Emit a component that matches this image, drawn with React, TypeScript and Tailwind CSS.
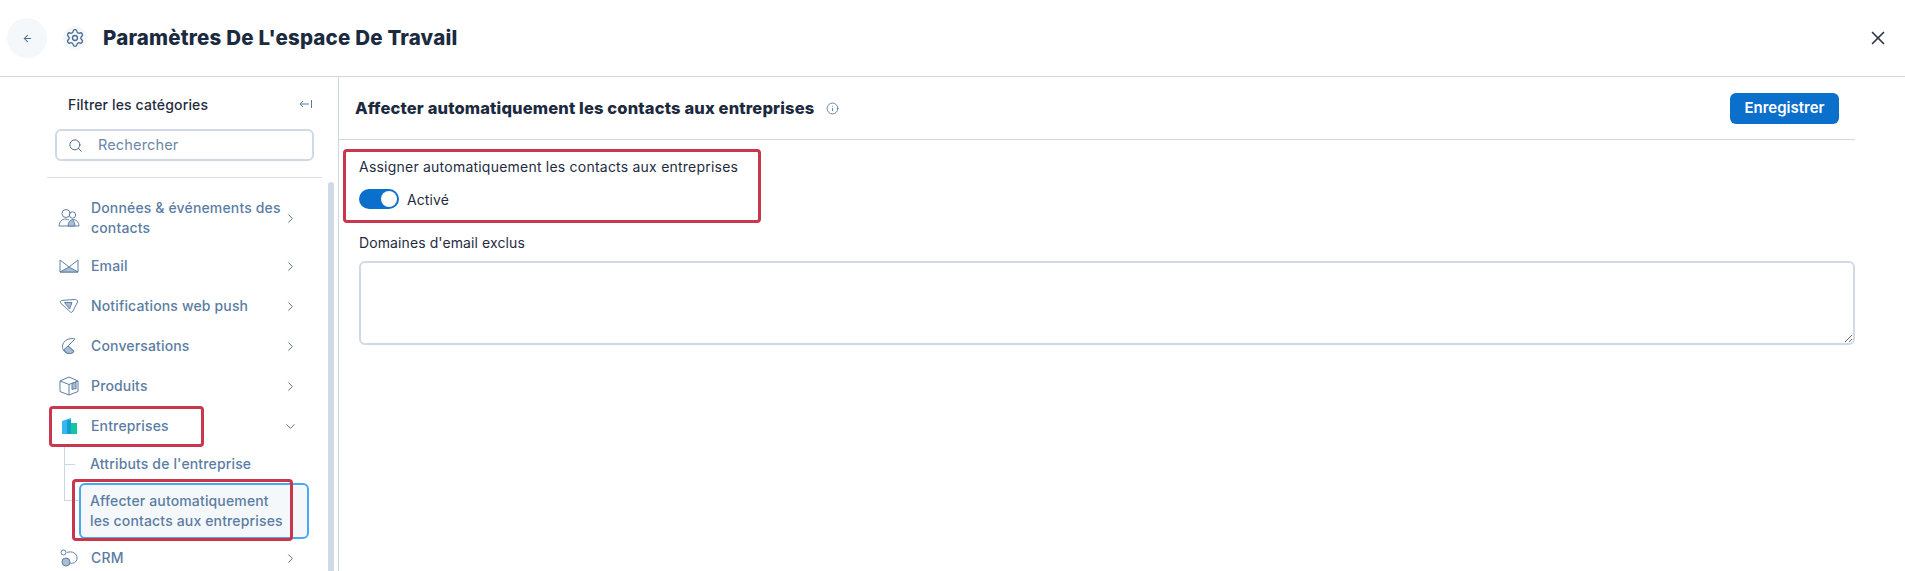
import React from "react";
import { ArrowLeft, ChevronDown, ChevronRight, Info, Search, Settings, X } from "lucide-react";

const body = { fontFamily: "Inter, 'Noto Sans', sans-serif" };

function Users() {
  return (
    <svg width="22" height="20" viewBox="0 0 22 20" fill="none" stroke="#5f80a6" strokeWidth="1">
      <circle cx="8" cy="5.5" r="4" />
      <circle cx="14.5" cy="7" r="3.2" />
      <path d="M1 18c.5-4.5 3-7 6.5-7 1.5 0 2.5.5 3.5 1" />
      <path d="M1 18h20c-.3-4-2.500-6.500-6.500-6.500" />
      <path d="M10 18c0-3.500 2-6 4.500-6.500 1.500 2 2.500 4 2.500 6.500z" fill="#a9bdd3" />
    </svg>
  );
}
function Mail() {
  return (
    <svg width="20" height="14" viewBox="0 0 20 14" fill="none" stroke="#5f80a6" strokeWidth="1">
      <path d="M1 1v12h18V1L10 8z" />
      <path d="M1 13l9-5 9 5z" fill="#a9bdd3" />
    </svg>
  );
}
function Push() {
  return (
    <svg width="20" height="16" viewBox="0 0 20 16" fill="none" stroke="#5f80a6" strokeWidth="1">
      <path d="M2.500 2.500L15 1.500c2.500-.2 4 1 3.500 2.500L14 13c-1 1.800-2.500 1.800-3.500.2L1.500 5c-.5-1.200 0-2.300 1-2.500z" />
      <path d="M5.500 4.500h7.500L10.500 11z" fill="#a9bdd3" />
    </svg>
  );
}
function Chat() {
  return (
    <svg width="16" height="18" viewBox="0 0 16 18" fill="none" stroke="#5f80a6" strokeWidth="1">
      <path d="M14 2C9 .5 2 3 1.500 9c-.3 4 2.500 7.500 6.500 7.500 2 0 4-.7 5-2" />
      <path d="M14 2L7 9l6 5" />
      <path d="M3 12.500L7 9l6 5.500c-1 1.500-3 2-5 2-2.500 0-4-1.500-5-4z" fill="#a9bdd3" />
    </svg>
  );
}
function Box() {
  return (
    <svg width="20" height="20" viewBox="0 0 20 20" fill="none" stroke="#5f80a6" strokeWidth="1">
      <path d="M1 5l9-4 9 4v10.500L10 19l-9-3.500z" />
      <path d="M1 5l9 3.500L19 5M10 8.500V19" />
      <path d="M13 7.500v6l2-.8 2 .2V6z" fill="#a9bdd3" />
    </svg>
  );
}
function Building() {
  return (
    <svg width="15" height="16" viewBox="0 0 15 16">
      <path d="M0 3l9-3v16H0z" fill="#38b6f2" />
      <path d="M9 5h6v11H9z" fill="#12c7a0" />
      <path d="M5 2h4v14H5z" fill="#0f9fd0" />
    </svg>
  );
}
function Crm() {
  return (
    <svg width="18" height="18" viewBox="0 0 18 18" fill="none" stroke="#5f80a6" strokeWidth="1">
      <circle cx="3.500" cy="3.500" r="2.500" />
      <path d="M7 3.500c5-2 10 1 10 5.500s-4 6-7 5" />
      <circle cx="6" cy="13" r="4" fill="#a9bdd3" />
    </svg>
  );
}

function Row({ icon, label, open }: { icon: React.ReactNode; label: string; open?: boolean }) {
  return (
    <div className="relative flex h-10 items-center">
      <span className="flex w-[43px] shrink-0 items-center justify-center pl-[5px] pr-[6px]">{icon}</span>
      <span className="w-[191px] text-[14px] leading-5 font-medium tracking-[0.15px] text-[#5b7da3]">{label}</span>
      <span className="flex w-4 justify-center text-[#4c6c92]">
        {open ? <ChevronDown size={15} strokeWidth={1.5} /> : <ChevronRight size={15} strokeWidth={1.5} />}
      </span>
    </div>
  );
}

export default function App() {
  return (
    <div className="relative h-[571px] overflow-hidden bg-white text-[#1f2c40]" style={body}>
      <header className="flex h-[77px] items-center border-b border-[#cbd7e6] pl-[7px] pr-[16px]">
        <span className="flex h-10 w-10 items-center justify-center rounded-full bg-[#f5f8fb] text-[#4c6c92]">
          <ArrowLeft size={11} strokeWidth={2.2} />
        </span>
        <span className="ml-4 flex h-6 w-6 items-center justify-center rounded-full bg-[#f5f8fb] text-[#4c6c92]">
          <Settings size={20} strokeWidth={1.6} />
        </span>
        <h1 className="ml-4 flex-1 text-[20.500px] leading-7 font-extrabold tracking-[0.2px] text-[#1c2a3f]">
          Paramètres De L'espace De Travail
        </h1>
        <X size={22} strokeWidth={1.8} className="text-[#2b3648]" />
      </header>

      <div className="flex h-[494px]">
        <aside className="relative h-full w-[339px] shrink-0 border-r border-[#cbd7e6] pl-[47px] pr-[16px]">
          <div className="flex h-[52px] items-center justify-between pt-[3px] pb-[1px] pl-[21px] pr-[10px]">
            <span className="text-[14px] font-medium tracking-[0.15px] text-[#1f2c40]">Filtrer les catégories</span>
            <svg width="13" height="10" viewBox="0 0 13 10" fill="none" stroke="#5b7da3" strokeWidth="1">
              <path d="M10 5H1M4 2L1 5l3 3M12.500 1v8" />
            </svg>
          </div>
          <div className="ml-2 flex h-8 w-[259px] items-center rounded-md border-2 border-[#cfdae6] pl-[11px] text-[#4c6c92]">
            <Search size={15} strokeWidth={1.6} />
            <span className="ml-[15px] text-[14.500px] tracking-[0.15px] text-[#6b87a8]">Rechercher</span>
          </div>
          <div className="mt-4 border-t border-[#d6e0ea] pt-[21px]">
            <div className="pl-[1px]">
              <div className="-mt-[1px] mb-[8px]">
                <Row icon={<Users />} label="Données & événements des contacts" />
              </div>
              <Row icon={<Mail />} label="Email" />
              <Row icon={<Push />} label="Notifications web push" />
              <Row icon={<Chat />} label="Conversations" />
              <Row icon={<Box />} label="Produits" />
              <Row icon={<Building />} label="Entreprises" open />
              <div className="relative ml-[42px] w-[229px]">
                <div className="flex h-[35px] items-center text-[14px] font-medium tracking-[0.15px] text-[#5b7da3]">
                  Attributs de l'entreprise
                </div>
                <div className="-ml-[11px] mt-[2px] h-[56px] w-[230px] rounded-md border-2 border-[#4aa8f0] bg-[#f5f8fb] pl-[9px] pt-[6px] text-[14px] leading-5 font-medium tracking-[0.15px] text-[#5b7da3]">
                  Affecter automatiquement
                  <br />
                  les contacts aux entreprises
                </div>
              </div>
              <div className="-mt-[1px]">
                <Row icon={<Crm />} label="CRM" />
              </div>
            </div>
          </div>
          <div className="absolute right-[4px] top-[105px] h-[400px] w-[6px] rounded-t bg-[#cfdae6]" />
          <div className="absolute left-[64px] top-[369px] h-[55px] w-[15px] border-b border-l border-[#cbd7e6]" />
          <div className="absolute left-[64px] top-[387px] h-px w-[11px] bg-[#cbd7e6]" />
        </aside>

        <main className="w-[1516px] shrink-0">
          <div className="flex h-[63px] items-center justify-between border-b border-[#cbd7e6] pl-[16px] pr-[16px]">
            <div className="flex items-center">
              <h2 className="text-[16.500px] font-extrabold tracking-[0.15px] text-[#1c2a3f]">Affecter automatiquement les contacts aux entreprises</h2>
              <Info size={13} strokeWidth={1.5} className="ml-3 text-[#4c6c92]" />
            </div>
            <button className="mt-px h-[31px] w-[109px] rounded-md bg-[#0b6fcc] text-[15px] font-semibold text-white">Enregistrer</button>
          </div>
          <div className="pl-[20px] pt-[17px]">
            <div className="text-[14px] leading-5 tracking-[0.22px] text-[#1f2c40]">Assigner automatiquement les contacts aux entreprises</div>
            <div className="mt-[12px] flex h-5 items-center">
              <span className="flex h-5 w-10 items-center justify-end rounded-full bg-[#0b6fcc] pr-[2px]">
                <span className="h-4 w-4 rounded-full bg-white" />
              </span>
              <span className="ml-[8px] text-[14px] tracking-[0.1px]">Activé</span>
            </div>
            <div className="mt-[24px] text-[14px] leading-5 tracking-[0.1px]">Domaines d'email exclus</div>
            <textarea className="mt-[8px] block h-[84px] w-[1496px] rounded-md border-2 border-[#cfdae6] bg-white outline-none" />
          </div>
        </main>
      </div>

      <div className="absolute left-[49px] top-[406px] h-[41px] w-[155px] rounded-sm border-[3px] border-[#c9374c]" />
      <div className="absolute left-[72px] top-[479px] h-[62px] w-[221px] rounded-sm border-[3px] border-[#c9374c]" />
      <div className="absolute left-[343px] top-[149px] h-[74px] w-[418px] rounded-sm border-[3px] border-[#c9374c]" />
    </div>
  );
}
